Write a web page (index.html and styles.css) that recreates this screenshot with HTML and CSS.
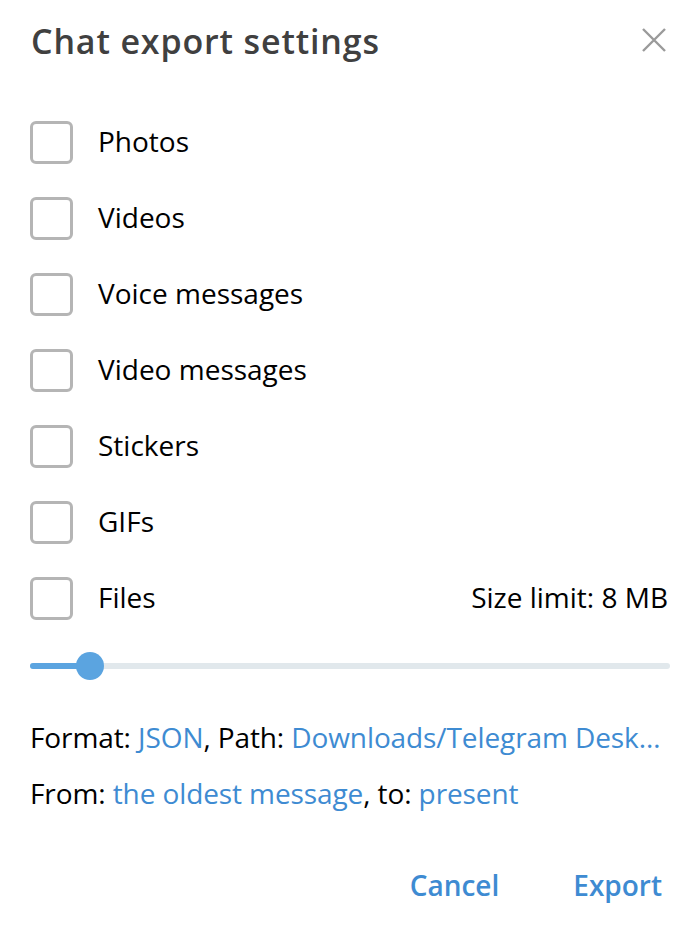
FILE: index.html
```html
<!DOCTYPE html>
<html>
<head>
<meta charset="utf-8">
<link rel="stylesheet" href="styles.css">
</head>
<body>
<div class="dialog">
  <div class="header">
    <h1 class="title">Chat export settings</h1>
    <button class="close" aria-label="Close">
      <svg width="26" height="26" viewBox="0 0 26 26"><path d="M2 2 L24 24 M24 2 L2 24" stroke="#9a9a9a" stroke-width="2.4" fill="none"/></svg>
    </button>
  </div>
  <div class="options">
    <label class="row"><span class="box"></span><span class="label">Photos</span></label>
    <label class="row"><span class="box"></span><span class="label">Videos</span></label>
    <label class="row"><span class="box"></span><span class="label">Voice messages</span></label>
    <label class="row"><span class="box"></span><span class="label">Video messages</span></label>
    <label class="row"><span class="box"></span><span class="label">Stickers</span></label>
    <label class="row"><span class="box"></span><span class="label">GIFs</span></label>
    <label class="row"><span class="box"></span><span class="label">Files</span><span class="limit">Size limit: 8 MB</span></label>
  </div>
  <div class="slider">
    <div class="track"><div class="fill" style="width:60px"></div><div class="thumb"></div></div>
  </div>
  <p class="line">Format: <a class="link">JSON</a>, Path: <a class="link">Downloads/Telegram Desk…</a></p>
  <p class="line">From: <a class="link">the oldest message</a>, to: <a class="link">present</a></p>
  <div class="buttons">
    <button class="btn">Cancel</button>
    <button class="btn">Export</button>
  </div>
</div>
</body>
</html>
```
FILE: styles.css
```css
* { box-sizing: border-box; }
html, body { margin: 0; padding: 0; background: #fff; }
body { font-family: "Open Sans", "Noto Sans", sans-serif; color: #000; }
.dialog { width: 700px; height: 934px; padding: 0 30px 0 30px; }
.header { display: flex; justify-content: space-between; align-items: center; height: 84px; }
.title { margin: 0; font-size: 34px; font-weight: 600; color: #404040; letter-spacing: 0.85px; padding-left: 1px; margin-top: -3px; }
.close { background: none; border: 0; padding: 0; margin-right: 3px; margin-top: -4px; display: flex; cursor: pointer; }
.options { display: flex; flex-direction: column; padding-top: 20px; }
.row { display: flex; align-items: center; height: 76px; }
.box { width: 43px; height: 43px; border: 3px solid #b5b5b5; border-radius: 6px; flex: none; }
.label { font-size: 28px; margin-left: 25px; margin-top: -2px; }
.limit { margin-left: auto; font-size: 28px; margin-top: -2px; margin-right: 2px; }
.slider { height: 60px; display: flex; align-items: center; }
.track { position: relative; width: 100%; height: 6px; background: #e1e8ec; border-radius: 3px; }
.fill { height: 6px; background: #5ba4e0; border-radius: 3px; }
.thumb { position: absolute; left: 46px; top: -11px; width: 28px; height: 28px; border-radius: 50%; background: #5ba4e0; }
.line { margin: 0; font-size: 28px; height: 56px; line-height: 56px; letter-spacing: -0.1px; }
.line:first-of-type { margin-top: 13px; }
.link { color: #3e8bd2; text-decoration: none; }
.buttons { display: flex; justify-content: flex-end; gap: 74px; margin-top: 45px; padding-right: 8px; }
.btn { background: none; border: 0; padding: 0; font-family: "Open Sans", sans-serif; font-size: 28px; font-weight: 600; color: #3e8bd2; }
```
